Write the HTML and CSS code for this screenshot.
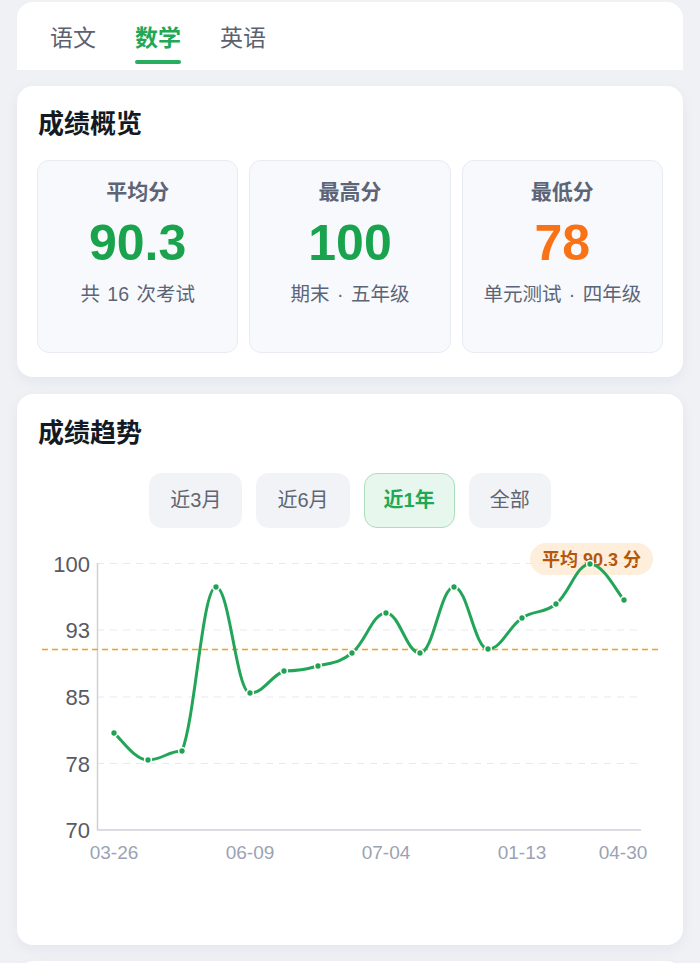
FILE: index.html
```html
<!DOCTYPE html>
<html lang="zh-CN">
<head>
<meta charset="utf-8">
<title>成绩</title>
<link rel="stylesheet" href="styles.css">
</head>
<body>
<div class="page">
  <div class="tabs-card">
    <div class="tab">语文</div>
    <div class="tab active">数学<span class="tab-bar"></span></div>
    <div class="tab">英语</div>
  </div>

  <section class="card overview">
    <h2 class="card-title">成绩概览</h2>
    <div class="stats">
      <div class="stat">
        <div class="stat-label">平均分</div>
        <div class="stat-value green">90.3</div>
        <div class="stat-sub">共 16 次考试</div>
      </div>
      <div class="stat">
        <div class="stat-label">最高分</div>
        <div class="stat-value green">100</div>
        <div class="stat-sub">期末 · 五年级</div>
      </div>
      <div class="stat">
        <div class="stat-label">最低分</div>
        <div class="stat-value orange">78</div>
        <div class="stat-sub">单元测试 · 四年级</div>
      </div>
    </div>
  </section>

  <section class="card trend">
    <h2 class="card-title">成绩趋势</h2>
    <div class="ranges">
      <div class="range">近3月</div>
      <div class="range">近6月</div>
      <div class="range active">近1年</div>
      <div class="range">全部</div>
    </div>
    <svg class="chart" width="666" height="340" viewBox="17 535 666 340">
      <rect x="530" y="543" width="123" height="32" rx="16" class="badge-bg"/>
      <text x="591.5" y="565.5" class="badge-text">平均 90.3 分</text>
      <g class="grid">
        <line x1="97" y1="563.5" x2="637" y2="563.5"/>
        <line x1="97" y1="630" x2="637" y2="630"/>
        <line x1="97" y1="697" x2="637" y2="697"/>
        <line x1="97" y1="763.5" x2="637" y2="763.5"/>
      </g>
      <line x1="97.5" y1="563" x2="97.5" y2="830" class="axis"/>
      <line x1="97" y1="830" x2="641" y2="830" class="axis"/>
      <g class="ylab">
        <text x="90" y="571.5">100</text>
        <text x="90" y="638">93</text>
        <text x="90" y="705">85</text>
        <text x="90" y="771.5">78</text>
        <text x="90" y="838">70</text>
      </g>
      <g class="xlab">
        <text x="114" y="858.5">03-26</text>
        <text x="250" y="858.5">06-09</text>
        <text x="386" y="858.5">07-04</text>
        <text x="522" y="858.5">01-13</text>
        <text x="623" y="858.5">04-30</text>
      </g>
      <line x1="42" y1="649.5" x2="658" y2="649.5" class="avg"/>
      <path class="series" d="M114,733 C120.8,738.4 134.4,760 148,760 C161.6,760 168.4,751 182,751 C195.6,716.4 202.4,587 216,587 C229.6,587 236.4,693 250,693 C263.6,693 270.4,676.4 284,671 C297.6,671 304.4,669.6 318,666 C331.6,662.4 338.4,663.6 352,653 C365.6,642.4 372.4,613 386,613 C399.6,613 406.4,653 420,653 C433.6,653 440.4,587 454,587 C467.6,587 474.4,649 488,649 C501.6,649 508.4,627 522,618 C535.6,609 542.4,614.8 556,604 C569.6,593.2 576.4,564 590,564 C603.6,564 617.2,592.8 624,600"/>
      <g class="dots">
        <circle cx="114" cy="733" r="3.4"/>
        <circle cx="148" cy="760" r="3.4"/>
        <circle cx="182" cy="751" r="3.4"/>
        <circle cx="216" cy="587" r="3.4"/>
        <circle cx="250" cy="693" r="3.4"/>
        <circle cx="284" cy="671" r="3.4"/>
        <circle cx="318" cy="666" r="3.4"/>
        <circle cx="352" cy="653" r="3.4"/>
        <circle cx="386" cy="613" r="3.4"/>
        <circle cx="420" cy="653" r="3.4"/>
        <circle cx="454" cy="587" r="3.4"/>
        <circle cx="488" cy="649" r="3.4"/>
        <circle cx="522" cy="618" r="3.4"/>
        <circle cx="556" cy="604" r="3.4"/>
        <circle cx="590" cy="564" r="3.4"/>
        <circle cx="624" cy="600" r="3.4"/>
      </g>
    </svg>
  </section>

  <section class="card next"></section>
</div>
</body>
</html>
```

FILE: styles.css
```css
* { box-sizing: border-box; }
html, body { margin: 0; padding: 0; }
body {
  background: #f0f1f5;
  font-family: "Liberation Sans", "Noto Sans CJK SC", sans-serif;
  color: #111827;
  height: 963px;
  overflow: hidden;
}
.page {
  padding: 2px 17px 0;
  display: flex;
  flex-direction: column;
}
.tabs-card {
  background: #fff;
  height: 68px;
  border-radius: 16px 16px 0 0;
  display: flex;
  gap: 39px;
  padding: 21px 0 0 33px;
}
.tab {
  font-size: 23px;
  line-height: 30px;
  color: #5b6170;
  display: flex;
  flex-direction: column;
  align-items: stretch;
}
.tab.active {
  color: #1fa855;
  font-weight: 700;
}
.tab-bar {
  display: block;
  height: 4px;
  margin-top: 7px;
  border-radius: 2px;
  background: #27ae5f;
}
.card {
  background: #fff;
  border-radius: 16px;
  box-shadow: 0 4px 14px rgba(30, 40, 70, 0.05);
  padding: 21px 20px 24px;
  margin-top: 16px;
}
.card-title {
  margin: 0;
  font-size: 26px;
  line-height: 34px;
  font-weight: 700;
  color: #141a24;
  padding-left: 1px;
}
.stats {
  display: grid;
  grid-template-columns: repeat(3, 1fr);
  gap: 11px;
  margin-top: 19px;
}
.stat {
  height: 193px;
  background: #f8f9fc;
  border: 1px solid #e8ebf1;
  border-radius: 12px;
  display: flex;
  flex-direction: column;
  align-items: center;
  padding-top: 17px;
}
.stat-label {
  font-size: 21px;
  line-height: 28px;
  font-weight: 600;
  color: #5b6577;
}
.stat-value {
  font-size: 50px;
  line-height: 58px;
  font-weight: 700;
  margin-top: 8px;
}
.stat-value.green { color: #19a34c; }
.stat-value.orange { color: #f97316; }
.stat-sub {
  font-size: 19.5px;
  line-height: 28px;
  color: #5b6577;
  margin-top: 8px;
  white-space: nowrap;
  word-spacing: 2px;
}
.trend {
  margin-top: 17px;
  padding: 22px 20px 70px;
}
.ranges {
  display: flex;
  justify-content: center;
  gap: 14px;
  margin-top: 23px;
}
.range {
  height: 55px;
  line-height: 55px;
  padding: 0 21px;
  border-radius: 13px;
  background: #f1f3f6;
  color: #5f6573;
  font-size: 20px;
}
.range.active {
  background: #e8f7ed;
  border: 1.5px solid #a9dfba;
  line-height: 52px;
  padding: 0 19px;
  color: #1fa855;
  font-weight: 700;
}
.chart {
  display: block;
  margin: 7px -20px 0;
}
.badge-bg { fill: #fdefdb; }
.badge-text {
  font-size: 18px;
  font-weight: 700;
  fill: #b5560d;
  text-anchor: middle;
}
.grid line {
  stroke: #e6e9f0;
  stroke-width: 1;
  stroke-dasharray: 7 6;
}
.axis {
  stroke: #cdd0d6;
  stroke-width: 1.5;
}
.ylab text {
  font-size: 22px;
  fill: #565b64;
  text-anchor: end;
}
.xlab text {
  font-size: 19px;
  fill: #9aa3b4;
  text-anchor: middle;
}
.avg {
  stroke: #f5a00f;
  stroke-width: 1.6;
  stroke-dasharray: 6 4;
}
.series {
  fill: none;
  stroke: #23a559;
  stroke-width: 3;
  stroke-linejoin: round;
  stroke-linecap: round;
}
.dots circle {
  fill: #1fa352;
  stroke: #fff;
  stroke-width: 1.5;
}
.next {
  height: 60px;
  padding: 0;
}
```
